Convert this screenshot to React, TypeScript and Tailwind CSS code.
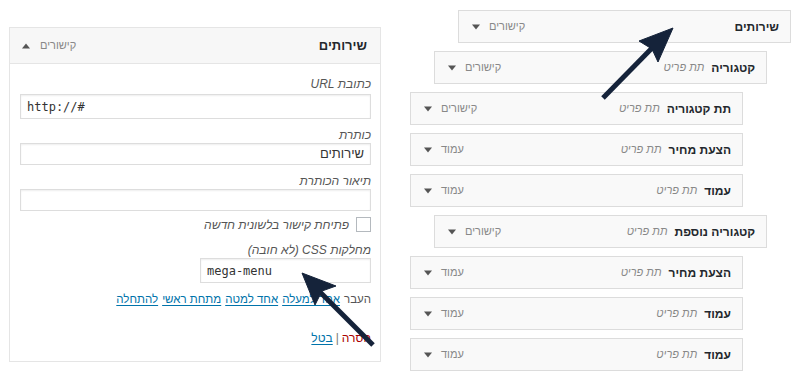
import { ReactNode } from 'react'

const font = { fontFamily: '"Liberation Sans", Arial, sans-serif' }

type Item = { title: string; sub?: boolean; type: string; depth: number }

const ITEMS: Item[] = [
  { title: 'שירותים', type: 'קישורים', depth: 0 },
  { title: 'קטגוריה', sub: true, type: 'קישורים', depth: 1 },
  { title: 'תת קטגוריה', sub: true, type: 'קישורים', depth: 2 },
  { title: 'הצעת מחיר', sub: true, type: 'עמוד', depth: 2 },
  { title: 'עמוד', sub: true, type: 'עמוד', depth: 2 },
  { title: 'קטגוריה נוספת', sub: true, type: 'קישורים', depth: 1 },
  { title: 'הצעת מחיר', sub: true, type: 'עמוד', depth: 2 },
  { title: 'עמוד', sub: true, type: 'עמוד', depth: 2 },
  { title: 'עמוד', sub: true, type: 'עמוד', depth: 2 },
]

const depthMargin = ['mr-0', 'mr-[24px]', 'mr-[48px]']

const Caret = ({ up }: { up?: boolean }) => (
  <svg width="8" height="6" viewBox="0 0 8 6" className="shrink-0">
    {up ? <path d="M0 5.5 L4 0.5 L8 5.5 Z" fill="#555" /> : <path d="M0 0.5 L4 5.5 L8 0.5 Z" fill="#555" />}
  </svg>
)

const MenuItem = ({ item }: { item: Item }) => (
  <div
    className={`w-[333px] h-[33px] border border-[#dcdcdc] bg-[#f9f9f9] flex items-center justify-between pr-[11px] pl-[13px] ${depthMargin[item.depth]}`}
  >
    <div className="flex items-center gap-[7px]">
      <span className="text-[12px] font-bold text-[#23282d]">{item.title}</span>
      {item.sub && <span className="text-[11px] italic text-[#888]">תת פריט</span>}
    </div>
    <div className="flex items-center gap-[9px]">
      <span className="text-[11px] text-[#888]">{item.type}</span>
      <Caret />
    </div>
  </div>
)

const Label = ({ children }: { children: ReactNode }) => (
  <div className="h-[16px] leading-[16px] text-[12px] italic text-[#555]">{children}</div>
)

const Field = ({ value, mono, h, w }: { value: string; mono?: boolean; h: string; w?: string }) => (
  <div
    className={`${h} ${w ?? 'w-full'} border border-[#dddddd] bg-white shadow-[inset_0_1px_2px_rgba(0,0,0,0.07)] flex items-center px-[6px] text-[13px] text-[#333]`}
    dir={mono ? 'ltr' : 'rtl'}
    style={mono ? { fontFamily: '"DejaVu Sans Mono", "Liberation Mono", monospace', fontSize: 12 } : undefined}
  >
    {value}
  </div>
)

const Link = ({ children }: { children: ReactNode }) => (
  <span className="text-[#0073aa] underline underline-offset-2">{children}</span>
)

export default function App() {
  return (
    <div className="relative w-[800px] h-[380px] bg-white overflow-hidden" style={font}>
      <div className="flex items-start">
        {/* edit panel */}
        <div className="ml-[9px] mt-[27px] w-[372px] h-[335px] border border-[#e5e5e5] bg-white" dir="rtl">
          <div className="h-[36px] bg-[#f7f7f7] border-b border-[#e5e5e5] flex items-center justify-between pr-[13px] pl-[12px]">
            <span className="text-[13px] font-bold text-[#23282d]">שירותים</span>
            <div className="flex items-center gap-[10px]">
              <span className="text-[11px] text-[#888]">קישורים</span>
              <Caret up />
            </div>
          </div>
          <div className="pt-[12px] pr-[9px] pl-[10px] flex flex-col">
            <Label>כתובת URL</Label>
            <div className="mt-[2px]">
              <Field value="http://#" mono h="h-[25px]" />
            </div>
            <div className="mt-[8px]">
              <Label>כותרת</Label>
            </div>
            <Field value="שירותים" h="h-[22px]" />
            <div className="mt-[8px]">
              <Label>תיאור הכותרת</Label>
            </div>
            <Field value="" h="h-[22px]" />
            <div className="mt-[6px] flex items-center gap-[7px] h-[15px]">
              <div className="w-[15px] h-[15px] border border-[#b4b9be] bg-white" />
              <span className="text-[12px] italic text-[#555]">פתיחת קישור בלשונית חדשה</span>
            </div>
            <div className="mt-[10px]">
              <Label>מחלקות CSS (לא חובה)</Label>
            </div>
            <Field value="mega-menu" mono h="h-[25px]" w="w-[171px]" />
            <div className="mt-[8px] h-[16px] leading-[16px] text-[11.5px] text-[#555] flex items-center gap-[4px]">
              <span>העבר</span>
              <Link>אחד למעלה</Link>
              <Link>אחד למטה</Link>
              <Link>מתחת ראשי</Link>
              <Link>להתחלה</Link>
            </div>
            <div className="mt-[23px] h-[16px] leading-[16px] text-[12px] flex items-center gap-[3px]">
              <span className="text-[#a00]">הסרה</span>
              <span className="text-[#777]">|</span>
              <Link>בטל</Link>
            </div>
          </div>
        </div>

        {/* menu structure */}
        <div className="ml-[29px] mt-[10px] w-[381px] flex flex-col gap-[8px]" dir="rtl">
          {ITEMS.map((item, i) => (
            <MenuItem key={i} item={item} />
          ))}
        </div>
      </div>

      {/* annotation arrows */}
      <svg className="absolute left-0 top-0 pointer-events-none" width="800" height="380" viewBox="0 0 800 380">
        <g fill="#15233a" stroke="#15233a">
          <line x1="603" y1="98" x2="655" y2="45" strokeWidth="5" />
          <polygon points="673,28 658,62 652,49 639,41" strokeWidth="1" />
          <line x1="373" y1="345" x2="318" y2="290" strokeWidth="5" />
          <polygon points="302,273 336,286 322,291 315,305" strokeWidth="1" />
        </g>
      </svg>
    </div>
  )
}
